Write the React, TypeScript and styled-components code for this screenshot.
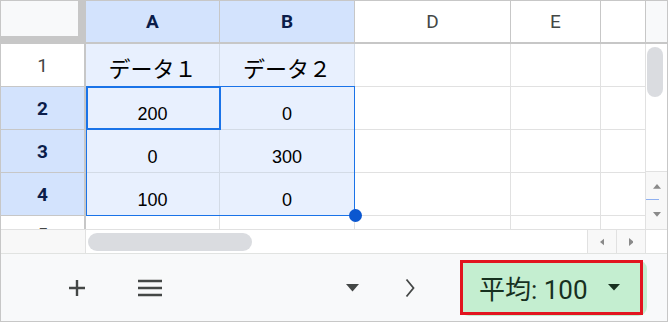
import React from 'react';
import styled, { createGlobalStyle } from 'styled-components';

const Global = createGlobalStyle`
  html, body { margin: 0; padding: 0; background: #fff; }
  body { font-family: Roboto, "Noto Sans CJK JP", sans-serif; }
`;

const Frame = styled.div`
  width: 668px;
  height: 322px;
  box-sizing: border-box;
  border: 1px solid #c7c7c7;
  display: flex;
  flex-direction: column;
  overflow: hidden;
  background: #fff;
`;

const SheetArea = styled.div`
  display: flex;
  height: 228px;
  flex: none;
`;

const Grid = styled.div`
  position: relative;
  display: grid;
  grid-template-columns: 85px 134px 135px 156px 90px 44px;
  grid-template-rows: repeat(5, 43px) 42px;
  height: 228px;
  overflow: hidden;
`;

const Corner = styled.div`
  box-sizing: border-box;
  background: #f8f9fa;
  border-right: 8px solid #c7c7c7;
  border-bottom: 8px solid #c7c7c7;
`;

const ColHead = styled.div<{ $sel?: boolean; $last?: boolean }>`
  box-sizing: border-box;
  display: flex;
  align-items: center;
  justify-content: center;
  background: ${(p) => (p.$sel ? '#d3e3fd' : '#fff')};
  border-right: ${(p) => (p.$last ? 'none' : '1px solid #c7c7c7')};
  border-bottom: 2px solid #c7c7c7;
  font-family: Roboto, sans-serif;
  font-weight: ${(p) => (p.$sel ? 700 : 400)};
  font-size: 19px;
  color: ${(p) => (p.$sel ? '#0b1d4a' : '#444746')};
`;

const RowHead = styled.div<{ $sel?: boolean; $peek?: boolean }>`
  box-sizing: border-box;
  display: flex;
  align-items: ${(p) => (p.$peek ? 'flex-start' : 'center')};
  justify-content: center;
  padding-top: ${(p) => (p.$peek ? '9px' : '0')};
  background: ${(p) => (p.$sel ? '#d3e3fd' : '#fff')};
  border-right: 2px solid #c7c7c7;
  border-bottom: 1px solid #c7c7c7;
  font-family: Roboto, sans-serif;
  font-weight: ${(p) => (p.$sel ? 700 : 400)};
  font-size: 19px;
  line-height: 1;
  color: ${(p) => (p.$sel ? '#0b1d4a' : '#444746')};
`;

const Cell = styled.div<{ $sel?: boolean; $jp?: boolean; $last?: boolean }>`
  box-sizing: border-box;
  display: flex;
  align-items: flex-end;
  justify-content: center;
  background: ${(p) => (p.$sel ? '#e8f0fe' : '#fff')};
  border-right: ${(p) => (p.$last ? 'none' : `1px solid ${p.$sel ? '#d3dbe6' : '#e1e1e1'}`)};
  border-bottom: 1px solid ${(p) => (p.$sel ? '#d3dbe6' : '#e1e1e1')};
  padding-bottom: ${(p) => (p.$jp ? '8px' : '6px')};
  font-family: ${(p) =>
    p.$jp ? '"Noto Sans CJK JP", sans-serif' : '"Liberation Sans", Arial, sans-serif'};
  font-size: ${(p) => (p.$jp ? '22px' : '18px')};
  line-height: 1;
  color: #000;
`;

const RangeBox = styled.div`
  position: absolute;
  left: 85px;
  top: 85px;
  width: 269px;
  height: 130px;
  box-sizing: border-box;
  border: 1px solid #1a73e8;
  pointer-events: none;
`;

const ActiveBox = styled.div`
  position: absolute;
  left: 85px;
  top: 85px;
  width: 135px;
  height: 44px;
  box-sizing: border-box;
  border: 2px solid #1a73e8;
  pointer-events: none;
`;

const FillHandle = styled.div`
  position: absolute;
  left: 348px;
  top: 208px;
  width: 13px;
  height: 13px;
  border-radius: 50%;
  background: #0b57d0;
`;

const VScroll = styled.div`
  width: 22px;
  display: flex;
  flex-direction: column;
  flex: none;
`;

const VHead = styled.div`
  height: 43px;
  box-sizing: border-box;
  background: #f8f9fa;
  border-left: 1px solid #c7c7c7;
  border-bottom: 2px solid #c7c7c7;
`;

const VTrack = styled.div`
  flex: 1;
  box-sizing: border-box;
  border-left: 1px solid #e1e1e1;
  padding: 3px 0 0 1px;
`;

const VThumb = styled.div`
  width: 16px;
  height: 50px;
  border-radius: 8px;
  background: #dadce0;
`;

const VArrows = styled.div`
  height: 58px;
  box-sizing: border-box;
  border-left: 1px solid #e1e1e1;
  border-top: 1px solid #e1e1e1;
  background: #f8f8f8;
  display: flex;
  flex-direction: column;
  position: relative;
`;

const VArrowBtn = styled.div`
  flex: 1;
  display: flex;
  align-items: center;
  justify-content: center;
`;

const VMarker = styled.div`
  position: absolute;
  left: 0;
  top: 27px;
  width: 13px;
  height: 1px;
  background: #8fb0f0;
`;

const HScrollRow = styled.div`
  display: flex;
  height: 24px;
  flex: none;
  box-sizing: border-box;
  border-top: 1px solid #e1e1e1;
`;

const HStub = styled.div`
  width: 85px;
  box-sizing: border-box;
  background: #f8f8f8;
  border-right: 1px solid #e1e1e1;
`;

const HTrack = styled.div`
  flex: 1;
  display: flex;
  align-items: center;
  padding-left: 2px;
`;

const HThumb = styled.div`
  width: 164px;
  height: 18px;
  border-radius: 9px;
  background: #dadce0;
`;

const HArrowBtn = styled.div`
  width: 29px;
  box-sizing: border-box;
  border-left: 1px solid #e1e1e1;
  background: #f8f8f8;
  display: flex;
  align-items: center;
  justify-content: center;
`;

const HCorner = styled.div`
  width: 22px;
  box-sizing: border-box;
  border-left: 1px solid #e1e1e1;
  background: #fff;
`;

const BottomBar = styled.div`
  flex: 1;
  display: flex;
  align-items: center;
  box-sizing: border-box;
  border-top: 1px solid #e1e3e1;
  background: #f8f9fa;
  padding-left: 56px;
`;

const IconButton = styled.div<{ $ml?: number }>`
  width: 40px;
  height: 40px;
  margin-left: ${(p) => p.$ml ?? 0}px;
  display: flex;
  align-items: center;
  justify-content: center;
  color: #444746;
  flex: none;
`;

const Pill = styled.div`
  position: relative;
  margin-left: 30px;
  width: 187px;
  height: 56px;
  border-radius: 9px;
  background: #c4eed0;
  display: flex;
  align-items: center;
  padding-left: 19px;
  box-sizing: border-box;
  flex: none;
`;

const PillText = styled.span`
  font-family: Roboto, "Noto Sans CJK JP", sans-serif;
  font-size: 26px;
  color: #17301f;
  white-space: nowrap;
`;

const PillArrow = styled.span`
  margin-left: 20px;
  display: flex;
`;

const RedMark = styled.div`
  position: absolute;
  left: 0;
  top: 0;
  width: 183px;
  height: 55px;
  box-sizing: border-box;
  border: 3px solid #e2141f;
  pointer-events: none;
`;

const cols = [
  { label: 'A', sel: true },
  { label: 'B', sel: true },
  { label: 'D', sel: false },
  { label: 'E', sel: false },
  { label: '', sel: false },
];

const rows: { label: string; sel: boolean; cells: string[] }[] = [
  { label: '1', sel: false, cells: ['データ１', 'データ２'] },
  { label: '2', sel: true, cells: ['200', '0'] },
  { label: '3', sel: true, cells: ['0', '300'] },
  { label: '4', sel: true, cells: ['100', '0'] },
  { label: '5', sel: false, cells: ['', ''] },
];

const Tri = ({ dir, size = 8, color = '#8a8a8a' }: { dir: 'up' | 'down' | 'left' | 'right'; size?: number; color?: string }) => {
  const pts: Record<string, string> = {
    up: '0,6 5,0 10,6',
    down: '0,0 10,0 5,6',
    left: '6,0 6,10 0,5',
    right: '0,0 6,5 0,10',
  };
  const horiz = dir === 'up' || dir === 'down';
  return (
    <svg width={horiz ? size + 2 : size * 0.6} height={horiz ? size * 0.6 : size + 2} viewBox={horiz ? '0 0 10 6' : '0 0 6 10'}>
      <polygon points={pts[dir]} fill={color} />
    </svg>
  );
};

export default function App() {
  return (
    <>
      <Global />
      <Frame>
        <SheetArea>
          <Grid>
            <Corner />
            {cols.map((c, i) => (
              <ColHead key={i} $sel={c.sel} $last={i === cols.length - 1}>
                {c.label}
              </ColHead>
            ))}
            {rows.map((r) => (
              <React.Fragment key={r.label}>
                <RowHead $sel={r.sel} $peek={r.label === '5'}>{r.label}</RowHead>
                <Cell $sel={r.label !== '5'} $jp={r.label === '1'}>{r.cells[0]}</Cell>
                <Cell $sel={r.label !== '5'} $jp={r.label === '1'}>{r.cells[1]}</Cell>
                <Cell />
                <Cell />
                <Cell $last />
              </React.Fragment>
            ))}
            <RangeBox />
            <ActiveBox />
            <FillHandle />
          </Grid>
          <VScroll>
            <VHead />
            <VTrack>
              <VThumb />
            </VTrack>
            <VArrows>
              <VArrowBtn>
                <Tri dir="up" />
              </VArrowBtn>
              <VArrowBtn>
                <Tri dir="down" />
              </VArrowBtn>
              <VMarker />
            </VArrows>
          </VScroll>
        </SheetArea>
        <HScrollRow>
          <HStub />
          <HTrack>
            <HThumb />
          </HTrack>
          <HArrowBtn>
            <Tri dir="left" />
          </HArrowBtn>
          <HArrowBtn>
            <Tri dir="right" />
          </HArrowBtn>
          <HCorner />
        </HScrollRow>
        <BottomBar>
          <IconButton>
            <svg width="18" height="18" viewBox="0 0 18 18">
              <path d="M9 1v16M1 9h16" stroke="#444746" strokeWidth="2.4" fill="none" />
            </svg>
          </IconButton>
          <IconButton $ml={33}>
            <svg width="26" height="18" viewBox="0 0 26 18">
              <path d="M1 2h24M1 9h24M1 16h24" stroke="#444746" strokeWidth="2.6" fill="none" />
            </svg>
          </IconButton>
          <IconButton $ml={162}>
            <svg width="13" height="8" viewBox="0 0 13 8">
              <polygon points="0,0 13,0 6.5,7.5" fill="#444746" />
            </svg>
          </IconButton>
          <IconButton $ml={18}>
            <svg width="10" height="20" viewBox="0 0 10 20">
              <path d="M1.5 1.5l7 8.5-7 8.5" stroke="#444746" strokeWidth="1.8" fill="none" />
            </svg>
          </IconButton>
          <Pill>
            <PillText>平均: 100</PillText>
            <PillArrow>
              <svg width="12" height="7" viewBox="0 0 12 7">
                <polygon points="0,0 12,0 6,6.5" fill="#17301f" />
              </svg>
            </PillArrow>
            <RedMark />
          </Pill>
        </BottomBar>
      </Frame>
    </>
  );
}
